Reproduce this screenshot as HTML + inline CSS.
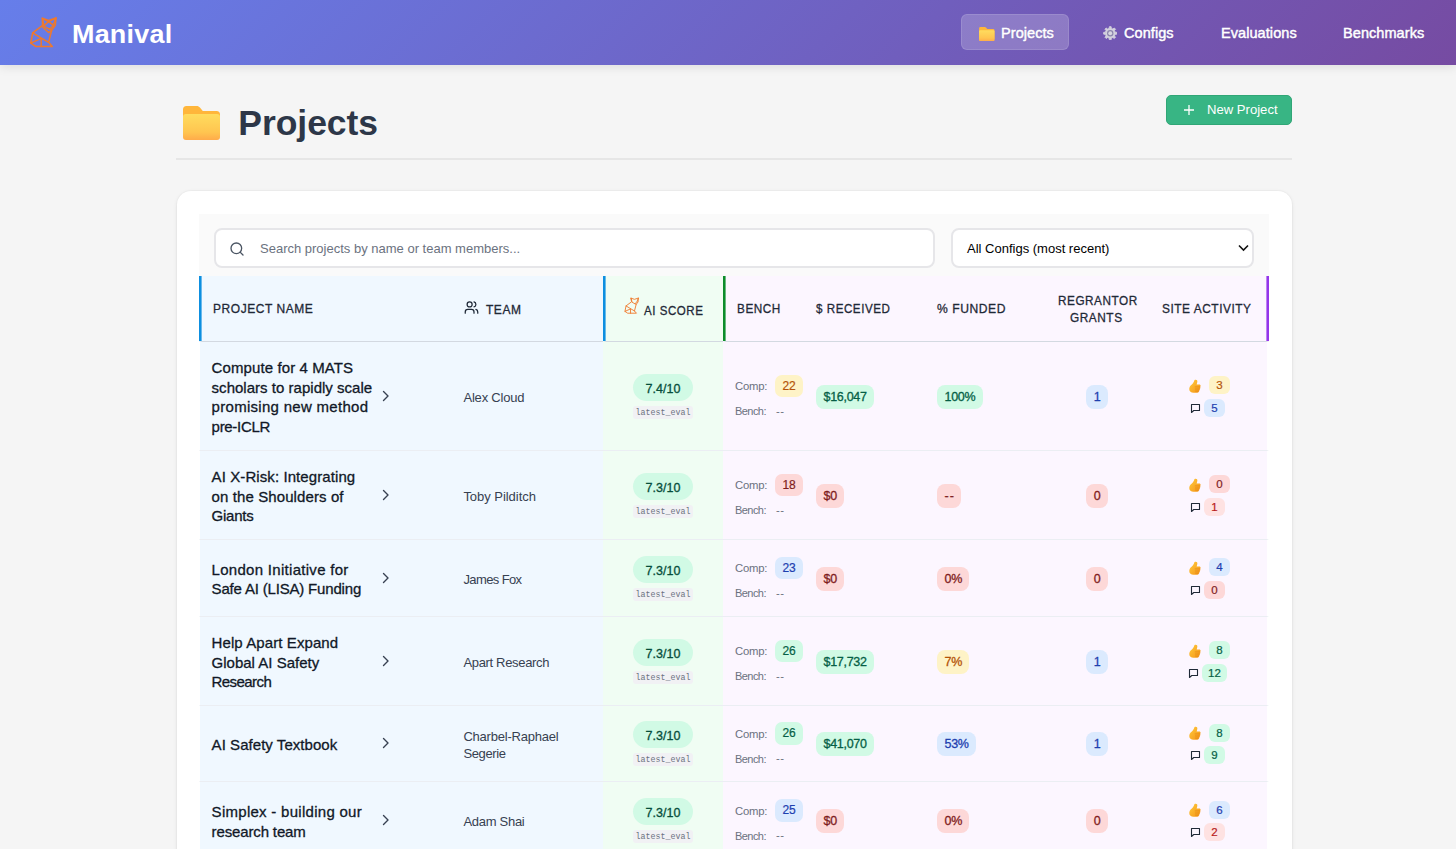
<!DOCTYPE html>
<html lang="en">
<head>
<meta charset="utf-8">
<title>Manival - Projects</title>
<style>
*{box-sizing:border-box;margin:0;padding:0}
html,body{width:1456px;height:849px;overflow:hidden}
body{background:#f5f5f5;font-family:"Liberation Sans",sans-serif;color:#1a202c;position:relative}
svg{display:block}
/* ---------- top bar ---------- */
.topbar{position:absolute;left:0;top:0;width:1456px;height:65px;background:linear-gradient(135deg,#667eea 0%,#764ba2 100%);box-shadow:0 2px 10px rgba(0,0,0,.1)}
.logo{position:absolute;left:29px;top:16px;width:28px;height:32px}
.brand{position:absolute;left:71.700px;top:17px;font-size:25px;line-height:34px;font-weight:700;color:#fff;letter-spacing:.2px;transform:scaleX(1.078);transform-origin:0 50%;white-space:nowrap}
.nav a{position:absolute;top:15px;height:35px;line-height:37px;font-size:14.5px;font-weight:400;-webkit-text-stroke:.45px #fff;letter-spacing:.07px;color:#fff;text-decoration:none;white-space:nowrap;text-shadow:0 1px 2px rgba(0,0,0,.1)}
.nav .pill{left:961px;width:108px;top:14px;height:36px;background:rgba(255,255,255,.2);border:1px solid rgba(255,255,255,.12);border-radius:6px}
.nav .ico{position:absolute}
/* ---------- page heading ---------- */
.h1{position:absolute;left:238.300px;top:98.500px;font-size:35.5px;line-height:48px;font-weight:700;color:#2d3748;letter-spacing:-.05px;white-space:nowrap}
.folder-lg{position:absolute;left:183.400px;top:105.800px}
.newbtn{position:absolute;left:1166px;top:95px;width:126px;height:30px;background:#38b584;border:1px solid #30a676;border-radius:5px;color:#fff;font-size:13.1px;line-height:28px;white-space:nowrap}
.newbtn span{position:absolute;left:40px;top:0}
.newbtn svg{position:absolute;left:16px;top:8px}
.rule{position:absolute;left:176px;top:158px;width:1116px;height:2px;background:#e6e6e6}
/* ---------- card ---------- */
.card{position:absolute;left:176.500px;top:190.700px;width:1115px;height:700px;background:#fff;border-radius:14px;box-shadow:0 1px 4px rgba(0,0,0,.08),0 0 0 1px rgba(0,0,0,.02)}
.toolbar{position:absolute;left:22.500px;top:23px;width:1070px;height:63.300px;background:#fafafa}
.search{position:absolute;left:15px;top:14.800px;width:721px;height:39.500px;background:#fff;border:2px solid #e6e6e9;border-radius:8px}
.search svg{position:absolute;left:13.200px;top:10.200px}
.search span{position:absolute;left:44px;top:0;line-height:37.500px;font-size:13px;color:#6b7280;white-space:nowrap}
.select{position:absolute;left:752px;top:14.800px;width:303px;height:39.500px;background:#fff;border:2px solid #e6e6e9;border-radius:8px}
.select span{position:absolute;left:14px;top:0;line-height:37.500px;font-size:13px;color:#000;white-space:nowrap}
.select svg{position:absolute;right:.8px;top:14px}
/* ---------- table ---------- */
table{position:absolute;left:22.500px;top:85.300px;width:1070px;border-collapse:separate;border-spacing:0;table-layout:fixed}
th{height:66px;font-size:13px;font-weight:400;-webkit-text-stroke:.3px #1f2937;letter-spacing:.6px;color:#1f2937;text-align:left;padding:0 12px;vertical-align:middle;border-bottom:1px solid #d3d9e1;white-space:nowrap;text-transform:uppercase}
td{vertical-align:middle;padding:0 12px;border-bottom:1px solid #ebeef3;font-size:13.5px;color:#374151}
.cb{background:#f0f8ff}
.cg{background:#f0fdf3}
.cp{background:#fcf6ff}
th.cb.first{border-left:3px solid transparent;background:linear-gradient(90deg,#0d8fe0 2.100px,rgba(13,143,224,0) 3.100px) border-box,#f0f8ff border-box}
th.cg{border-left:3px solid transparent;background:linear-gradient(90deg,#0d8fe0 2.100px,rgba(13,143,224,0) 3.100px) border-box,#f0fdf3 border-box;text-align:center;padding:0}
th.bench{border-left:3px solid transparent;background:linear-gradient(90deg,#0c8c2a 2.100px,rgba(12,140,42,0) 3.100px) border-box,#fcf6ff border-box}
th.last{border-right:3px solid transparent;background:linear-gradient(270deg,#9436ea 2.100px,rgba(148,54,234,0) 3.100px) border-box,#fcf6ff border-box}
th{position:relative;padding:0}
.ht{position:absolute;line-height:16px;margin-top:26.500px;transform-origin:0 50%}
.hi{position:absolute}
th.ctr,td.ctr{text-align:center}
td:first-child{border-left:1px solid #fff;padding-left:11px}
td:last-child{border-right:2px solid #fff;padding-right:10px}
.pname{display:flex;align-items:center;position:relative;top:.6px;left:.6px;font-size:15px;line-height:19.6px;font-weight:400;-webkit-text-stroke:.3px #111827;color:#111827}
.pname b{display:block;width:168px;font-weight:400;position:relative;top:.8px}
.pname i,.team i{font-style:normal;white-space:nowrap}
.pname svg{margin-left:2.300px;flex:none;position:relative;top:-1px}
.team{font-size:13px;line-height:17px;color:#374151;letter-spacing:-.18px;position:relative;left:-.6px;top:1.200px}
.pill{display:inline-block;border-radius:8px;font-size:12.5px;-webkit-text-stroke:.3px;letter-spacing:-.3px;line-height:25px;height:24px;padding:0 7.500px;white-space:nowrap;position:relative;top:1px}
.g{background:#d1fae5;color:#065f46}
.r{background:#fdd8d8;color:#7f1d1d}
.y{background:#fef3c7;color:#b45309}
.b{background:#dbeafe;color:#1e40af}
.score{display:inline-block;position:relative;top:.5px;background:#d1fae5;color:#064e3b;border-radius:13.5px;height:27px;line-height:30px;width:60px;font-size:12.5px;-webkit-text-stroke:.3px #064e3b;text-align:center}
.le{display:block;position:relative;top:.5px;margin:5px auto 0;width:60px;font-family:"Liberation Mono","DejaVu Sans Mono",monospace;font-size:8.3px;line-height:14px;height:13px;color:#6b7280;background:#f1f1f4;border-radius:3px;text-align:center}

.bl{display:flex;align-items:center;height:22.5px;position:relative;top:1px;font-size:11.3px;letter-spacing:-.2px;color:#6b7280;white-space:nowrap}
.bl.b2{margin-top:4px;height:18px;top:1.500px}
.bl .k{display:inline-block;flex:none;width:40px;position:relative;top:.5px}
.bl.b2 .k{font-size:11px;letter-spacing:-.55px}
.bd{display:inline-block;height:22.500px;line-height:23.500px;-webkit-text-stroke:.2px;min-width:28px;padding:0 6px;border-radius:7px;font-size:12px;text-align:center}
.dash{margin-left:1px;letter-spacing:.5px}
.act{position:relative;width:124px;height:42px;margin-left:-12px;top:1px}
.a1,.a2{position:absolute;left:0;width:124px;display:flex;align-items:center;justify-content:center}
.a1{top:0;height:19px;left:2.300px}.a2{top:23px;height:18px;left:0}
.sb{display:inline-block;height:18px;line-height:18px;min-width:21px;padding:0 6px;border-radius:6px;font-size:11.5px;-webkit-text-stroke:.2px;text-align:center}
.a1 .sb{margin-left:7px}.a2 .sb{margin-left:4px}
.r2{background:#fee2e2;color:#b91c1c}
.th{position:relative;left:-1px;top:1.500px;margin-right:-1px}
.cm{position:relative;left:.5px;top:.3px}
.a1 .sb{position:relative;top:0;left:.6px}
</style>
</head>
<body>
<div class="topbar">
  <svg class="logo" viewBox="0 0 28 32" fill="none" stroke="#f0792b" stroke-width="1.500" stroke-linejoin="round" stroke-linecap="round"><path d="M13.3 2.200L19.600 4.400L27 1.900L26.300 9.400L22.800 13.900L19.600 26.300L23.300 30.500L6.900 30.500L1.700 27.100L3.700 16.800L13.600 9.400Z"/><path d="M19.600 5.400L24.600 9.600L20.400 13.200L14.600 10.200Z"/><path d="M13.300 2.200L15.100 9.900M13.300 2.200L19.600 5.600M27 1.900L19.600 5.600M27 1.900L24.100 9.400M20.400 12.700L22.800 13.900M3.700 16.800L19.600 26.300M1.700 27.100L12.200 22.400L12.200 30.500M13.600 11L19.600 16.500L22 15"/></svg>
  <div class="brand">Manival</div>
  <div class="nav">
    <a class="pill"><svg class="ico" style="left:17px;top:11.500px" width="15.600" height="14.200" viewBox="0 0 37 34"><defs><linearGradient id="fg2" x1="0" y1="0" x2="0" y2="1"><stop offset="0" stop-color="#ffdc5e"/><stop offset=".7" stop-color="#ffc550"/><stop offset="1" stop-color="#ffab4a"/></linearGradient></defs><path d="M0 3.500A3.500 3.500 0 0 1 3.500 0H13.500c1.600 0 2.600.5 3.600 1.700L19.800 5H33.500A3.500 3.500 0 0 1 37 8.500V30H0z" fill="#ffb63b"/><rect x="0" y="8" width="37" height="26" rx="3" fill="url(#fg2)"/></svg><span style="position:absolute;left:39px;top:0">Projects</span></a>
    <a style="left:0;width:0"><svg class="ico" style="left:1102.600px;top:10.600px" width="14.500" height="14.500" viewBox="0 0 24 24"><path d="M20.00 10.21L22.90 10.54L22.90 13.46L20.00 13.79L18.92 16.39L20.74 18.67L18.67 20.74L16.39 18.92L13.79 20.00L13.46 22.90L10.54 22.90L10.21 20.00L7.61 18.92L5.33 20.74L3.26 18.67L5.08 16.39L4.00 13.79L1.10 13.46L1.10 10.54L4.00 10.21L5.08 7.61L3.26 5.33L5.33 3.26L7.61 5.08L10.21 4.00L10.54 1.10L13.46 1.10L13.79 4.00L16.39 5.08L18.67 3.26L20.74 5.33L18.92 7.61Z" fill="#d3d1de" stroke="#d3d1de" stroke-width="1.500" stroke-linejoin="round"/><circle cx="12" cy="12" r="5.300" fill="#8c86ad"/><circle cx="12" cy="12" r="3.200" fill="#d8d6e2"/></svg></a><a style="left:1124px">Configs</a>
    <a style="left:1221px">Evaluations</a>
    <a style="left:1343px">Benchmarks</a>
  </div>
</div>

<svg class="folder-lg" width="37" height="34" viewBox="0 0 37 34"><defs><linearGradient id="fg1" x1="0" y1="0" x2="0" y2="1"><stop offset="0" stop-color="#ffdc5e"/><stop offset=".7" stop-color="#ffc550"/><stop offset="1" stop-color="#ffab4a"/></linearGradient></defs><path d="M0 3.500A3.500 3.500 0 0 1 3.500 0H13.500c1.600 0 2.600.5 3.600 1.700L19.800 5H33.500A3.500 3.500 0 0 1 37 8.500V30H0z" fill="#ffb63b"/><rect x="0" y="8" width="37" height="26" rx="3" fill="url(#fg1)"/></svg>
<div class="h1">Projects</div>
<div class="newbtn"><svg width="12" height="12" viewBox="0 0 12 12"><path d="M6 1v10M1 6h10" stroke="#fff" stroke-width="1.3" fill="none"/></svg><span>New Project</span></div>
<div class="rule"></div>

<div class="card">
  <div class="toolbar">
    <div class="search"><svg width="16" height="16" viewBox="0 0 24 24" fill="none" stroke="#4b5563" stroke-width="2" stroke-linecap="round"><circle cx="11" cy="11" r="8"/><path d="M21 21l-4.3-4.3"/></svg><span>Search projects by name or team members...</span></div>
    <div class="select"><span>All Configs (most recent)</span><svg width="14" height="8" viewBox="0 0 14 8"><path d="M2 1.5l4.5 4.5L11 1.5" stroke="#111" stroke-width="1.6" fill="none"/></svg></div>
  </div>
  <table>
    <colgroup><col style="width:253px"><col style="width:151px"><col style="width:120px"><col style="width:81px"><col style="width:121px"><col style="width:124px"><col style="width:96px"><col style="width:124px"></colgroup>
    <tr>
      <th class="cb first"><span class="ht" style="left:11px;top:-1px;transform:scaleX(0.923)">Project Name</span></th>
      <th class="cb"><svg class="hi" style="left:11.500px;top:23.700px" width="15" height="15" viewBox="0 0 24 24" fill="none" stroke="#1f2937" stroke-width="2" stroke-linecap="round" stroke-linejoin="round"><path d="M16 21v-2a4 4 0 0 0-4-4H6a4 4 0 0 0-4 4v2"/><circle cx="9" cy="7" r="4"/><path d="M22 21v-2a4 4 0 0 0-3-3.870"/><path d="M16 3.130a4 4 0 0 1 0 7.750"/></svg><span class="ht" style="left:34px;top:0;transform:scaleX(0.922)">Team</span></th>
      <th class="cg"><svg class="hi" style="left:17.500px;top:21.500px" width="15" height="17" viewBox="0 0 28 32" fill="none" stroke="#f0792b" stroke-width="1.700" stroke-linejoin="round" stroke-linecap="round"><path d="M13.3 2.200L19.600 4.400L27 1.900L26.300 9.400L22.800 13.900L19.600 26.300L23.300 30.500L6.900 30.500L1.700 27.100L3.700 16.800L13.600 9.400Z"/><path d="M13.300 2.200L15.100 9.900L20.400 12.700L24.100 9.400L27 1.900M20.400 12.700L22.800 13.900M3.700 16.800L19.600 26.300M1.700 27.100L12.200 22.400L12.200 30.500"/></svg><span class="ht" style="left:37.500px;top:.7px;transform:scaleX(0.888)">AI Score</span></th>
      <th class="cp bench"><span class="ht" style="left:11px;top:-1px;transform:scaleX(0.905)">Bench</span></th>
      <th class="cp"><span class="ht" style="left:12px;top:-1px;transform:scaleX(0.893)">$ Received</span></th>
      <th class="cp"><span class="ht" style="left:12px;top:-1px;transform:scaleX(0.931)">% Funded</span></th>
      <th class="cp"><span class="ht" style="left:9px;top:-9.500px;transform:scaleX(0.904)">Regrantor</span><span class="ht" style="left:21px;top:7.500px;transform:scaleX(0.91)">Grants</span></th>
      <th class="cp last"><span class="ht" style="left:16.500px;top:-1px;transform:scaleX(0.913)">Site Activity</span></th>
    </tr>
    <tr style="height:109px">
      <td class="cb"><div class="pname"><b><i style="letter-spacing:0.1px">Compute for 4 MATS</i><br><i style="letter-spacing:0.02px">scholars to rapidly scale</i><br><i style="letter-spacing:0.29px">promising new method</i><br><i style="letter-spacing:-0.3px">pre-ICLR</i></b><svg class="chev" width="8" height="12" viewBox="0 0 8 12"><path d="M1.5 1.5L6 6l-4.500 4.500" stroke="#374151" stroke-width="1.4" fill="none" stroke-linecap="round" stroke-linejoin="round"/></svg></div></td>
      <td class="cb"><div class="team"><i style="letter-spacing:-0.19px">Alex Cloud</i></div></td>
      <td class="cg ctr"><span class="score">7.4/10</span><span class="le">latest_eval</span></td>
      <td class="cp"><div class="bl"><span class="k">Comp:</span><span class="bd y">22</span></div><div class="bl b2"><span class="k">Bench:</span><span class="dash">--</span></div></td>
      <td class="cp"><span class="pill g">$16,047</span></td>
      <td class="cp"><span class="pill g">100%</span></td>
      <td class="cp ctr"><span class="pill b">1</span></td>
      <td class="cp"><div class="act"><div class="a1"><svg class="th" width="13" height="16" viewBox="0 0 26 32"><defs><linearGradient id="tg" x1="0" y1="0" x2="1" y2="1"><stop offset="0" stop-color="#ffcb3d"/><stop offset="1" stop-color="#f59417"/></linearGradient></defs><path d="M15.500 1.500c2.200 0 3.600 1.900 3.100 4.300l-1.300 5.400h5.200c1.700 0 2.900 1.300 2.700 2.900-.1.800-.5 1.400-1.100 1.800.6.600.9 1.400.7 2.300-.2.900-.8 1.600-1.600 1.900.4.600.5 1.300.3 2-.3.900-1 1.600-1.900 1.800.2.500.2 1.100 0 1.700-.5 1.300-1.700 2-3.200 2H11c-4.600 0-8.500-2.400-8.500-7.600 0-4.100 2.100-6.300 4.600-8.600 2.300-2.100 4.300-4.500 5.100-7.600.3-1.400 1.500-2.300 3.300-2.300z" fill="url(#tg)"/><path d="M14.500 15.800h9M14.800 20h8M15 24.200h6.500" stroke="#d9780d" stroke-width="1.300" stroke-linecap="round" fill="none" opacity=".75"/></svg><span class="sb y">3</span></div><div class="a2"><svg class="cm" width="11" height="11" viewBox="0 0 22 22"><path d="M3 3h16v12H7.500L3 19z" stroke="#1f2937" stroke-width="2.200" stroke-linejoin="round" fill="none"/></svg><span class="sb b">5</span></div></div></td>
    </tr>
    <tr style="height:89px">
      <td class="cb"><div class="pname"><b><i style="letter-spacing:0.09px">AI X-Risk: Integrating</i><br><i style="letter-spacing:0.1px">on the Shoulders of</i><br><i style="letter-spacing:-0.26px">Giants</i></b><svg class="chev" width="8" height="12" viewBox="0 0 8 12"><path d="M1.5 1.5L6 6l-4.500 4.500" stroke="#374151" stroke-width="1.4" fill="none" stroke-linecap="round" stroke-linejoin="round"/></svg></div></td>
      <td class="cb"><div class="team"><i style="letter-spacing:-0.04px">Toby Pilditch</i></div></td>
      <td class="cg ctr"><span class="score">7.3/10</span><span class="le">latest_eval</span></td>
      <td class="cp"><div class="bl"><span class="k">Comp:</span><span class="bd r">18</span></div><div class="bl b2"><span class="k">Bench:</span><span class="dash">--</span></div></td>
      <td class="cp"><span class="pill r">$0</span></td>
      <td class="cp"><span class="pill r" style="letter-spacing:1px;padding-right:6.500px">--</span></td>
      <td class="cp ctr"><span class="pill r">0</span></td>
      <td class="cp"><div class="act"><div class="a1"><svg class="th" width="13" height="16" viewBox="0 0 26 32"><defs><linearGradient id="tg" x1="0" y1="0" x2="1" y2="1"><stop offset="0" stop-color="#ffcb3d"/><stop offset="1" stop-color="#f59417"/></linearGradient></defs><path d="M15.500 1.500c2.200 0 3.600 1.900 3.100 4.300l-1.300 5.400h5.200c1.700 0 2.900 1.300 2.700 2.900-.1.800-.5 1.400-1.100 1.800.6.600.9 1.400.7 2.300-.2.900-.8 1.600-1.600 1.900.4.600.5 1.300.3 2-.3.900-1 1.600-1.900 1.800.2.500.2 1.100 0 1.700-.5 1.300-1.700 2-3.200 2H11c-4.600 0-8.500-2.400-8.500-7.600 0-4.100 2.100-6.300 4.600-8.600 2.300-2.100 4.300-4.500 5.100-7.600.3-1.400 1.500-2.300 3.300-2.300z" fill="url(#tg)"/><path d="M14.500 15.800h9M14.800 20h8M15 24.200h6.500" stroke="#d9780d" stroke-width="1.300" stroke-linecap="round" fill="none" opacity=".75"/></svg><span class="sb r">0</span></div><div class="a2"><svg class="cm" width="11" height="11" viewBox="0 0 22 22"><path d="M3 3h16v12H7.500L3 19z" stroke="#1f2937" stroke-width="2.200" stroke-linejoin="round" fill="none"/></svg><span class="sb r2">1</span></div></div></td>
    </tr>
    <tr style="height:77px">
      <td class="cb"><div class="pname"><b><i style="letter-spacing:0.29px">London Initiative for</i><br><i style="letter-spacing:-0.18px">Safe AI (LISA) Funding</i></b><svg class="chev" width="8" height="12" viewBox="0 0 8 12"><path d="M1.5 1.5L6 6l-4.500 4.500" stroke="#374151" stroke-width="1.4" fill="none" stroke-linecap="round" stroke-linejoin="round"/></svg></div></td>
      <td class="cb"><div class="team"><i style="letter-spacing:-0.61px">James Fox</i></div></td>
      <td class="cg ctr"><span class="score">7.3/10</span><span class="le">latest_eval</span></td>
      <td class="cp"><div class="bl"><span class="k">Comp:</span><span class="bd b">23</span></div><div class="bl b2"><span class="k">Bench:</span><span class="dash">--</span></div></td>
      <td class="cp"><span class="pill r">$0</span></td>
      <td class="cp"><span class="pill r">0%</span></td>
      <td class="cp ctr"><span class="pill r">0</span></td>
      <td class="cp"><div class="act"><div class="a1"><svg class="th" width="13" height="16" viewBox="0 0 26 32"><defs><linearGradient id="tg" x1="0" y1="0" x2="1" y2="1"><stop offset="0" stop-color="#ffcb3d"/><stop offset="1" stop-color="#f59417"/></linearGradient></defs><path d="M15.500 1.500c2.200 0 3.600 1.900 3.100 4.300l-1.300 5.400h5.200c1.700 0 2.900 1.300 2.700 2.900-.1.800-.5 1.400-1.100 1.800.6.600.9 1.400.7 2.300-.2.900-.8 1.600-1.600 1.900.4.600.5 1.300.3 2-.3.900-1 1.600-1.900 1.800.2.500.2 1.100 0 1.700-.5 1.300-1.700 2-3.200 2H11c-4.600 0-8.500-2.400-8.500-7.600 0-4.100 2.100-6.300 4.600-8.600 2.300-2.100 4.300-4.500 5.100-7.600.3-1.400 1.500-2.300 3.300-2.300z" fill="url(#tg)"/><path d="M14.500 15.800h9M14.800 20h8M15 24.200h6.500" stroke="#d9780d" stroke-width="1.300" stroke-linecap="round" fill="none" opacity=".75"/></svg><span class="sb b">4</span></div><div class="a2"><svg class="cm" width="11" height="11" viewBox="0 0 22 22"><path d="M3 3h16v12H7.500L3 19z" stroke="#1f2937" stroke-width="2.200" stroke-linejoin="round" fill="none"/></svg><span class="sb r">0</span></div></div></td>
    </tr>
    <tr style="height:89px">
      <td class="cb"><div class="pname"><b><i style="letter-spacing:0.09px">Help Apart Expand</i><br><i style="letter-spacing:0.0px">Global AI Safety</i><br><i style="letter-spacing:-0.58px">Research</i></b><svg class="chev" width="8" height="12" viewBox="0 0 8 12"><path d="M1.5 1.5L6 6l-4.500 4.500" stroke="#374151" stroke-width="1.4" fill="none" stroke-linecap="round" stroke-linejoin="round"/></svg></div></td>
      <td class="cb"><div class="team"><i style="letter-spacing:-0.33px">Apart Research</i></div></td>
      <td class="cg ctr"><span class="score">7.3/10</span><span class="le">latest_eval</span></td>
      <td class="cp"><div class="bl"><span class="k">Comp:</span><span class="bd g">26</span></div><div class="bl b2"><span class="k">Bench:</span><span class="dash">--</span></div></td>
      <td class="cp"><span class="pill g">$17,732</span></td>
      <td class="cp"><span class="pill y">7%</span></td>
      <td class="cp ctr"><span class="pill b">1</span></td>
      <td class="cp"><div class="act"><div class="a1"><svg class="th" width="13" height="16" viewBox="0 0 26 32"><defs><linearGradient id="tg" x1="0" y1="0" x2="1" y2="1"><stop offset="0" stop-color="#ffcb3d"/><stop offset="1" stop-color="#f59417"/></linearGradient></defs><path d="M15.500 1.500c2.200 0 3.600 1.900 3.100 4.300l-1.300 5.400h5.200c1.700 0 2.900 1.300 2.700 2.900-.1.800-.5 1.400-1.100 1.800.6.600.9 1.400.7 2.300-.2.900-.8 1.600-1.600 1.900.4.600.5 1.300.3 2-.3.900-1 1.600-1.900 1.800.2.500.2 1.100 0 1.700-.5 1.300-1.700 2-3.200 2H11c-4.600 0-8.500-2.400-8.500-7.600 0-4.100 2.100-6.300 4.600-8.600 2.300-2.100 4.300-4.500 5.100-7.600.3-1.400 1.500-2.300 3.300-2.300z" fill="url(#tg)"/><path d="M14.500 15.800h9M14.800 20h8M15 24.200h6.500" stroke="#d9780d" stroke-width="1.300" stroke-linecap="round" fill="none" opacity=".75"/></svg><span class="sb g">8</span></div><div class="a2"><svg class="cm" width="11" height="11" viewBox="0 0 22 22"><path d="M3 3h16v12H7.500L3 19z" stroke="#1f2937" stroke-width="2.200" stroke-linejoin="round" fill="none"/></svg><span class="sb g">12</span></div></div></td>
    </tr>
    <tr style="height:76px">
      <td class="cb"><div class="pname"><b><i style="letter-spacing:0.05px">AI Safety Textbook</i></b><svg class="chev" width="8" height="12" viewBox="0 0 8 12"><path d="M1.5 1.5L6 6l-4.500 4.500" stroke="#374151" stroke-width="1.4" fill="none" stroke-linecap="round" stroke-linejoin="round"/></svg></div></td>
      <td class="cb"><div class="team"><i style="letter-spacing:-0.21px">Charbel-Raphael</i><br><i style="letter-spacing:-0.37px">Segerie</i></div></td>
      <td class="cg ctr"><span class="score">7.3/10</span><span class="le">latest_eval</span></td>
      <td class="cp"><div class="bl"><span class="k">Comp:</span><span class="bd g">26</span></div><div class="bl b2"><span class="k">Bench:</span><span class="dash">--</span></div></td>
      <td class="cp"><span class="pill g">$41,070</span></td>
      <td class="cp"><span class="pill b">53%</span></td>
      <td class="cp ctr"><span class="pill b">1</span></td>
      <td class="cp"><div class="act"><div class="a1"><svg class="th" width="13" height="16" viewBox="0 0 26 32"><defs><linearGradient id="tg" x1="0" y1="0" x2="1" y2="1"><stop offset="0" stop-color="#ffcb3d"/><stop offset="1" stop-color="#f59417"/></linearGradient></defs><path d="M15.500 1.500c2.200 0 3.600 1.900 3.100 4.300l-1.300 5.400h5.200c1.700 0 2.900 1.300 2.700 2.900-.1.800-.5 1.400-1.100 1.800.6.600.9 1.400.7 2.300-.2.900-.8 1.600-1.600 1.900.4.600.5 1.300.3 2-.3.900-1 1.600-1.900 1.800.2.500.2 1.100 0 1.700-.5 1.300-1.700 2-3.200 2H11c-4.600 0-8.500-2.400-8.500-7.600 0-4.100 2.100-6.300 4.600-8.600 2.300-2.100 4.300-4.500 5.100-7.600.3-1.400 1.500-2.300 3.300-2.300z" fill="url(#tg)"/><path d="M14.500 15.800h9M14.800 20h8M15 24.200h6.500" stroke="#d9780d" stroke-width="1.300" stroke-linecap="round" fill="none" opacity=".75"/></svg><span class="sb g">8</span></div><div class="a2"><svg class="cm" width="11" height="11" viewBox="0 0 22 22"><path d="M3 3h16v12H7.500L3 19z" stroke="#1f2937" stroke-width="2.200" stroke-linejoin="round" fill="none"/></svg><span class="sb g">9</span></div></div></td>
    </tr>
    <tr style="height:78px">
      <td class="cb"><div class="pname"><b><i style="letter-spacing:0.28px">Simplex - building our</i><br><i style="letter-spacing:-0.14px">research team</i></b><svg class="chev" width="8" height="12" viewBox="0 0 8 12"><path d="M1.5 1.5L6 6l-4.500 4.500" stroke="#374151" stroke-width="1.4" fill="none" stroke-linecap="round" stroke-linejoin="round"/></svg></div></td>
      <td class="cb"><div class="team"><i style="letter-spacing:-0.28px">Adam Shai</i></div></td>
      <td class="cg ctr"><span class="score">7.3/10</span><span class="le">latest_eval</span></td>
      <td class="cp"><div class="bl"><span class="k">Comp:</span><span class="bd b">25</span></div><div class="bl b2"><span class="k">Bench:</span><span class="dash">--</span></div></td>
      <td class="cp"><span class="pill r">$0</span></td>
      <td class="cp"><span class="pill r">0%</span></td>
      <td class="cp ctr"><span class="pill r">0</span></td>
      <td class="cp"><div class="act"><div class="a1"><svg class="th" width="13" height="16" viewBox="0 0 26 32"><defs><linearGradient id="tg" x1="0" y1="0" x2="1" y2="1"><stop offset="0" stop-color="#ffcb3d"/><stop offset="1" stop-color="#f59417"/></linearGradient></defs><path d="M15.500 1.500c2.200 0 3.600 1.900 3.100 4.300l-1.300 5.400h5.200c1.700 0 2.900 1.300 2.700 2.900-.1.800-.5 1.400-1.100 1.800.6.600.9 1.400.7 2.300-.2.900-.8 1.600-1.600 1.900.4.600.5 1.300.3 2-.3.900-1 1.600-1.900 1.800.2.500.2 1.100 0 1.700-.5 1.300-1.700 2-3.200 2H11c-4.600 0-8.500-2.400-8.500-7.600 0-4.100 2.100-6.300 4.600-8.600 2.300-2.100 4.300-4.500 5.100-7.600.3-1.400 1.500-2.300 3.300-2.300z" fill="url(#tg)"/><path d="M14.500 15.800h9M14.800 20h8M15 24.200h6.500" stroke="#d9780d" stroke-width="1.300" stroke-linecap="round" fill="none" opacity=".75"/></svg><span class="sb b">6</span></div><div class="a2"><svg class="cm" width="11" height="11" viewBox="0 0 22 22"><path d="M3 3h16v12H7.500L3 19z" stroke="#1f2937" stroke-width="2.200" stroke-linejoin="round" fill="none"/></svg><span class="sb r2">2</span></div></div></td>
    </tr>
  </table>
</div>
</body>
</html>
